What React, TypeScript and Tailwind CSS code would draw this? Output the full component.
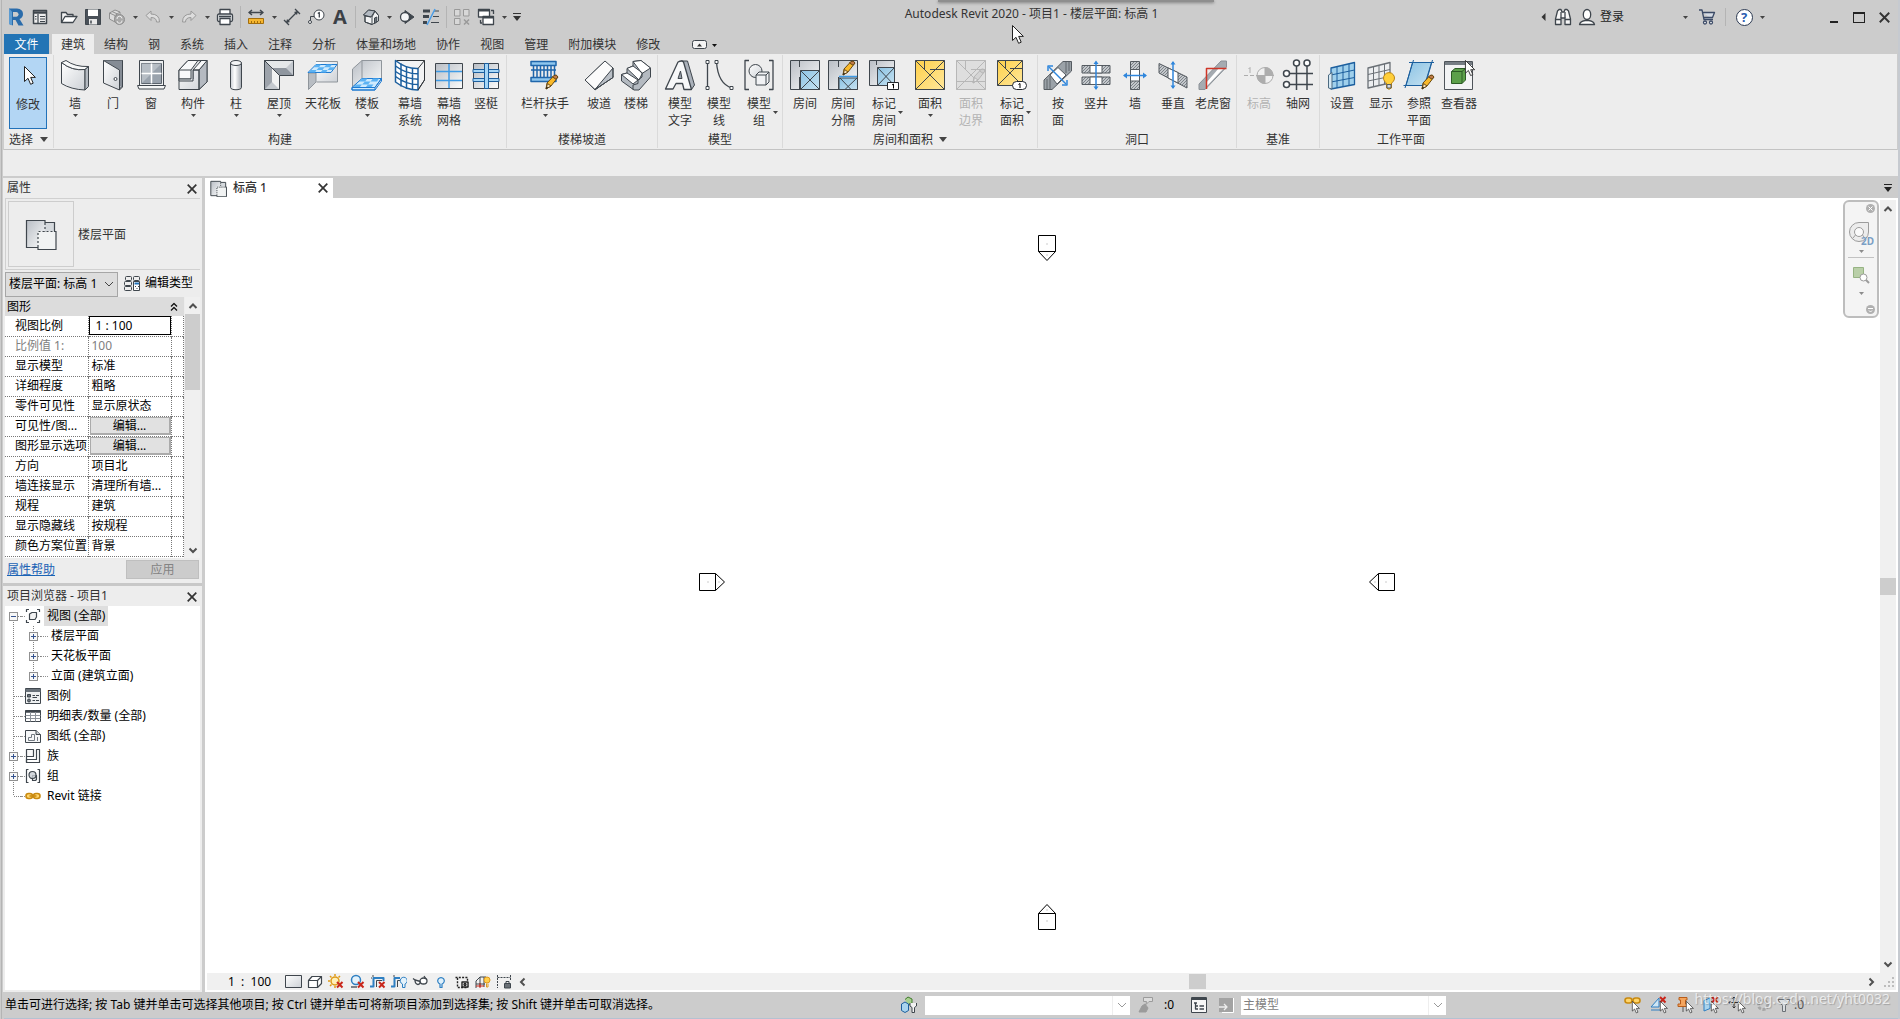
import type { ReactNode } from "react";

/* ---------- shared drawing helpers ---------- */

const INK = "#3f464d";
const BLUE = "#1c5f9e";

function Svg({ w = 32, h, children, sw = 1, stroke = INK }: { w?: number; h?: number; children: ReactNode; sw?: number; stroke?: string }) {
  const hh = h ?? w;
  return (
    <svg width={w} height={hh} viewBox={`0 0 ${w} ${hh}`} fill="none" stroke={stroke} strokeWidth={sw} strokeLinejoin="round" className="shrink-0" aria-hidden="true">
      {children}
    </svg>
  );
}

function Gradients() {
  return (
    <svg width="0" height="0" className="absolute" aria-hidden="true">
      <defs>
        <linearGradient id="grey" x1="0" y1="0" x2="1" y2="1">
          <stop offset="0" stopColor="#ffffff" />
          <stop offset="1" stopColor="#cdd1d6" />
        </linearGradient>
        <linearGradient id="greyRev" x1="0" y1="0" x2="1" y2="1">
          <stop offset="0" stopColor="#b9bec5" />
          <stop offset="1" stopColor="#fbfcfc" />
        </linearGradient>
        <linearGradient id="tube" x1="0" y1="0" x2="1" y2="0">
          <stop offset="0" stopColor="#c9ced4" />
          <stop offset="0.4" stopColor="#ffffff" />
          <stop offset="1" stopColor="#a3a9b1" />
        </linearGradient>
        <linearGradient id="sky" x1="0" y1="0" x2="1" y2="1">
          <stop offset="0" stopColor="#8cc3e4" />
          <stop offset="1" stopColor="#c6e2f1" />
        </linearGradient>
        <linearGradient id="sun" x1="0" y1="0" x2="1" y2="1">
          <stop offset="0" stopColor="#ffd04a" />
          <stop offset="1" stopColor="#ffe79b" />
        </linearGradient>
        <pattern id="hatch" width="3" height="3" patternUnits="userSpaceOnUse">
          <rect width="3" height="3" fill="#c4c8cc" />
          <path d="M0 3 3 0" stroke="#6b7177" strokeWidth="0.8" />
        </pattern>
      </defs>
    </svg>
  );
}

function Arrow({ tone = "#444444", big = false }: { tone?: string; big?: boolean }) {
  return big ? (
    <svg width="8" height="5" viewBox="0 0 8 5" className="shrink-0" aria-hidden="true"><path d="M0 0H8L4 5z" fill={tone} /></svg>
  ) : (
    <svg width="5" height="3" viewBox="0 0 5 3" className="shrink-0" aria-hidden="true"><path d="M0 0H5L2.5 3z" fill={tone} /></svg>
  );
}

function Chevron({ dir, tone = "#505050" }: { dir: "up" | "down" | "left" | "right"; tone?: string }) {
  const d = { up: "M1.5 7 5 3.5 8.5 7", down: "M1.5 3.5 5 7 8.5 3.5", left: "M6.5 1.5 3 5 6.5 8.5", right: "M3.5 1.5 7 5 3.5 8.5" }[dir];
  return <Svg w={10} sw={2} stroke={tone}><path d={d} strokeLinejoin="miter" /></Svg>;
}

function Cross({ size = 10 }: { size?: number }) {
  return (
    <svg width={size} height={size} viewBox="0 0 10 10" stroke="#333333" strokeWidth="1.7" className="shrink-0" aria-hidden="true">
      <path d="M0.7 0.7 9.3 9.3M9.3 0.7 0.7 9.3" />
    </svg>
  );
}

function Pencil({ x = 0, y = 0, grey = false }: { x?: number; y?: number; grey?: boolean }) {
  return (
    <g transform={`translate(${x} ${y})`} strokeWidth="1">
      <path d="M4 9 11 1.5Q13.5 0 15 3L8 12 3 15Z" fill={grey ? "#d4d4d4" : "#f9b92a"} stroke={grey ? "#b5b5b5" : "#6a4a12"} />
      <path d="M11 1.5Q13.5 0 15 3L13 5.2 9.5 3z" fill={grey ? "#cccccc" : "#c07a4a"} stroke={grey ? "#b5b5b5" : "#6a4a12"} />
      <path d="M4.5 9.5 8 12 3 15z" fill={grey ? "#e3e3e3" : "#f4dfb8"} stroke={grey ? "#b5b5b5" : "#6a4a12"} />
      <path d="M3 15 3.6 12.6 5.2 13.8z" fill={grey ? "#b5b5b5" : "#222222"} stroke="none" />
    </g>
  );
}

function Pointer({ x = 0, y = 0 }: { x?: number; y?: number }) {
  return <path transform={`translate(${x} ${y})`} d="M0.5 0.5V15.5L4 12.3 6.6 18.3 9.2 17.2 6.7 11.4H11.4Z" fill="#ffffff" stroke="#222222" strokeWidth="1" />;
}

/* ---------- ribbon icons (32 x 32) ---------- */

const RIBBON: Record<string, ReactNode> = {
  modify: <Svg><Pointer x={12} y={6} /></Svg>,
  wall: (
    <Svg><path d="M2.5 3.5Q13 12 26 10.5V31Q12 30.5 2.5 24.5z" fill="url(#grey)" /><path d="M2.5 3.5 7 1.5Q16 8 29.5 7.5L26 10.5Q13 12 2.5 3.5z" fill="#f8f9f9" /><path d="M26 10.5 29.5 7.5V27.5L26 31z" fill="#b4bac1" /></Svg>
  ),
  door: (
    <Svg><path d="M6.500 1.500H25.500V27L22.500 30" fill="#aeb4bb" /><path d="M6.500 1.500H25.500V27H22V11z" fill="#858c95" stroke="none" /><path d="M6.500 1.500 22.500 11V31L6.500 24z" fill="url(#grey)" /><path d="M25.500 1.500V28L22.500 31" /><circle cx="18.500" cy="20" r="1.500" fill="#ffffff" /></Svg>
  ),
  window: (
    <Svg><path d="M4.500 1.500H28.500V26.500H4.500z" fill="#eef0f1" /><path d="M6.500 4.500H26.500V24.500H6.500z" fill="#9aa3ad" stroke="#5b636c" /><path d="M6.500 4.500H26.500L6.500 24.500z" fill="#c3c9cf" stroke="none" opacity="0.7" /><path d="M16.500 4.500V24.500M6.500 14.500H26.500" stroke="#ffffff" strokeWidth="1.5" /><path d="M2.500 26.500H30.500L29 30H4z" fill="#f6f7f7" /></Svg>
  ),
  component: (
    <Svg><path d="M2 11 11 1.500H30V23L22 30.500H2z" fill="url(#grey)" /><path d="M22 30.500 30 23V1.500L22 11z" fill="#b5bac1" /><path d="M2 11 11 1.500H30L22 11H16L16 20H2z" fill="#f8f9fa" /><path d="M14 11 21 1.500 24 2 16 11V22H2V20H14z" fill="#dfe2e5" /><path d="M2 11H14M16 11H22V30.500" /></Svg>
  ),
  column: (
    <Svg><path d="M10.500 4V28.500C10.500 31.500 21.500 31.500 21.500 28.500V4z" fill="url(#tube)" /><ellipse cx="16" cy="4" rx="5.500" ry="2.500" fill="#f4f5f6" /></Svg>
  ),
  roof: (
    <Svg><path d="M1.500 1.500H30.500V16.500H16.500V30.500H1.500z" fill="#c4c9cf" /><path d="M1.500 1.500H30.500L23 9H9z" fill="#e5e8ea" stroke="none" /><path d="M1.500 1.500 9 9V23L1.500 30.500z" fill="#9da3ab" stroke="none" /><path d="M9 9H23L30.500 16.500H16.500z" fill="#8f969f" stroke="none" /><path d="M9 9 16.500 16.500V30.500L9 23z" fill="#f1f2f3" stroke="none" /><path d="M1.500 1.500H30.500V16.500H16.500V30.500H1.500zM1.500 1.500 16.500 16.500" /></Svg>
  ),
  ceiling: (
    <Svg stroke="#8f959b"><path d="M9 2.500H30.500V23H9.500" fill="url(#grey)" /><path d="M1.500 14V30.500L9 23V14z" fill="#b8bdc3" /><path d="M9 5.500H30L24 13.500H1z" fill="#cfeafd" stroke="#1e7ad1" /><path d="M9 5.500H14L12 8.200H6.500zM19.500 5.500H25L23 8.200H17zM12 8.200H17.500L15.500 11H9.500zM23 8.200H28L26 11H20.500zM4 11H9.500L8 13.500H1.500zM15.500 11H20.500L19 13.500H13.500z" fill="#5bb2f3" stroke="none" /></Svg>
  ),
  floor: (
    <Svg stroke="#8f959b"><path d="M1.500 10 11 1.500H30.500V20H11L1.500 28z" fill="url(#greyRev)" /><path d="M11 1.500V19" /><path d="M1 28.500 11 19.500H30.500L24 28.500V31H1z" fill="#cfeafd" stroke="#1e7ad1" /><path d="M11 19.500H16.500L14 22.500H8zM22 19.500H28L26 22.500H19.500zM14 22.500H19.500L17 25.500H11zM5 25.500H11L8.500 28.500H2zM17 25.500H22.500L20 28.500H14.500z" fill="#5bb2f3" stroke="none" /><path d="M1 28.500H24L30.500 19.500V22L24 31H1z" stroke="#1e7ad1" /></Svg>
  ),
  curtain: (
    <Svg stroke={BLUE}><path d="M2.500 1.500 6 1.500H30.500V21L24 31" stroke="#30353a" fill="#f2f3f4" /><path d="M1.500 1.500Q12 10 24 9.500V31Q12 31 1.500 23z" fill="#ffffff" strokeWidth="1.500" /><path d="M1.500 7Q12 15 24 14.800M1.500 12.500Q12 20 24 20.200M1.500 17.500Q12 25.500 24 25.600M7 4.500V27.500M12.500 7.500V30M18.500 9V31" strokeWidth="1.500" /><path d="M24 9.500 30.500 1.500M24 31 30.500 21" stroke="#30353a" /></Svg>
  ),
  grid: (
    <Svg><rect x="2.500" y="4.500" width="27" height="25" fill="url(#greyRev)" /><path d="M16 5V29M3 12.500H29M3 21.500H29" stroke="#3f9be6" strokeWidth="1.500" /></Svg>
  ),
  mullion: (
    <Svg><rect x="3.500" y="4.500" width="25" height="25" fill="url(#greyRev)" /><path d="M3 10.500H29V13.500H3zM3 19.500H29V22.500H3z" fill="#a5d6f7" stroke={BLUE} /><path d="M14.500 4.500H18.500V29.500H14.500z" fill="#a5d6f7" stroke={BLUE} /></Svg>
  ),
  railing: (
    <Svg stroke="#1f66ab"><path d="M2 2.500H27V6.500H2zM2 11H27M2 22.500H27V18.500H2z" fill="#8ec6ee" strokeWidth="1.500" /><path d="M4.500 6V18M8 6V18M11.500 6V18M15 6V18M18.500 6V18M22 6V18M25.500 6V18" strokeWidth="1.500" /><Pencil x={14} y={15} /></Svg>
  ),
  ramp: (
    <Svg><path d="M2 21 22 2 30 18 12 31z" fill="url(#grey)" /><path d="M2 21 22 2 24 11 12 29z" fill="#ffffff" stroke="none" /><path d="M22 2 30 9V19L12 30.500z" fill="#c3c8ce" stroke="none" /><path d="M2 21 22 2 30 9 12 30.500z" fill="#fbfbfb" stroke="none" /><path d="M12 30.500 30 9V18.500z" fill="#b9bfc6" /><path d="M2 21 12 30.500 30 18.500V9L22 2z" /></Svg>
  ),
  stair: (
    <Svg><path d="M1.500 15.500V22L14 31H19L30.500 18V9L21 1.500 13 2.500V7L7 9.500V14z" fill="#b4bac1" /><path d="M13 2.500 21 1.500 30.500 9 22 14.500zM7 9.500 13 7 22.500 14 19 21zM1.500 15.500 7 14 18 21 13 25z" fill="#ffffff" /><path d="M22 14.500V18L18 21V24.500L13 26V30.500" /></Svg>
  ),
  mtext: (
    <Svg><path d="M17 2 23.500 2 30.500 26 27.500 30.500 20 30z" fill="#aab1ba" /><path d="M1.500 30 14 3Q18 1 19.500 3L27.500 30.500H20L18.500 24.500H12L9 30z" fill="#f7f8f9" strokeWidth="1.300" /><path d="M14 19.500 16.500 12 18 19.500z" fill="#9aa1aa" /></Svg>
  ),
  mline: (
    <Svg><path d="M4.500 3V29M13.500 3Q15 25 29 29" strokeWidth="1.300" /><path d="M3 1.500H6V4.500H3zM3 27.500H6V30.500H3zM12 1.500H15V4.500H12zM27 27.500H30V30.500H27z" fill="#ffffff" /></Svg>
  ),
  mgroup: (
    <Svg><path d="M6 1.500H2V30.500H6M26 1.500H30V30.500H26" strokeWidth="1.300" /><circle cx="12.500" cy="12" r="6.500" fill="url(#grey)" /><path d="M13 16 16 13H26V23L23 26H13z" fill="#f1f2f4" /><path d="M13 16H23V26M23 16 26 13" /></Svg>
  ),
  room: (
    <Svg><rect x="1.500" y="1.500" width="29" height="29" fill="url(#greyRev)" /><path d="M11.500 11.500H30.500V30.500H11.500z" fill="url(#sky)" /><path d="M11.500 11.500 30.500 30.500M30.500 11.500 11.500 30.500M10.500 1.500V8M10.500 18V30.500" /></Svg>
  ),
  roomsep: (
    <Svg><rect x="1.500" y="1.500" width="29" height="29" fill="url(#greyRev)" /><path d="M12 19H30.500V30.500H12z" fill="url(#sky)" /><path d="M11.500 1.500V8M11.500 18V30.500M13 19 24 30.500M30 19 18 30.500" /><path d="M12 17.500H30" stroke="#3f9be6" strokeWidth="1.500" /><Pencil x={13} y={1} /></Svg>
  ),
  tagroom: (
    <Svg><rect x="1.500" y="1.500" width="25" height="25" fill="url(#greyRev)" /><path d="M9.500 8.500H26.500V26.500H9.500z" fill="url(#sky)" /><path d="M9.500 8.500 26.500 26.500M26.500 8.500 9.500 26.500M8.500 1.500V6" /><rect x="19.500" y="23.500" width="11" height="7" fill="#ffffff" stroke="#22272c" /><path d="M24 26 25.500 25V29.500" stroke="#000000" /></Svg>
  ),
  area: (
    <Svg><rect x="1.500" y="1.500" width="29" height="29" fill="url(#sun)" /><path d="M1.500 1.500 30.500 30.500M30.500 1.500 1.500 30.500M10.500 1.500V10.500M16 10.500H30.500" /></Svg>
  ),
  areabound: (
    <Svg stroke="#b7b7b7"><rect x="1.500" y="1.500" width="29" height="29" fill="#dedede" /><path d="M1.500 1.500 30.500 30.500M30.500 1.500 1.500 30.500M10.500 1.500V11M16 10.500H30.500M1.500 22.500H30.500" /><Pencil x={15} y={9} grey /></Svg>
  ),
  tagarea: (
    <Svg><rect x="1.500" y="1.500" width="25" height="25" fill="url(#sun)" /><path d="M1.500 1.500 26.500 26.500M26.500 1.500 1.500 26.500M9.500 1.500V9.500M14 9.500H26.500" /><rect x="16.500" y="22.500" width="14" height="8" rx="4" fill="#ffffff" stroke="#22272c" /><path d="M22.500 25.500 24 24.500V29" stroke="#000000" /></Svg>
  ),
  byface: (
    <Svg stroke="#555b61"><path d="M2 30.500V21L21 2.500H29.500V12L10 30.500z" fill="#9ba2a8" /><path d="M5 30V20M8 30V17M24 14V3M27 12V3" stroke="#60666c" /><path d="M8 16 16 8.500 24 16 15 25z" fill="#ffffff" /><path d="M7 8 24 25" stroke="#2f86dc" strokeWidth="1.500" /><path d="M6 12V7H11M20 26H25V21" stroke="#2f86dc" strokeWidth="1.500" /></Svg>
  ),
  shaft: (
    <Svg stroke="#555b61"><path d="M2 6.500H30V14H2zM2 18H30V25.500H2z" fill="url(#hatch)" /><path d="M10 6.500H22V14H10zM10 18H22V25.500H10z" fill="#ffffff" /><path d="M16 3V30" stroke="#2f86dc" strokeWidth="1.500" /><path d="M13.500 5 16 1.500 18.500 5zM13.500 27.500 16 31 18.500 27.500z" fill="#2f86dc" stroke="none" /></Svg>
  ),
  wallopen: (
    <Svg stroke="#555b61"><path d="M11.500 2.500H20.500V30.500H11.500z" fill="url(#hatch)" /><path d="M11.500 10.500H20.500V22H11.500z" fill="#ffffff" /><path d="M5 16.500H27" stroke="#2f86dc" strokeWidth="1.500" /><path d="M8 13.500 4 16.500 8 19.500zM24 13.500 28 16.500 24 19.500z" fill="#2f86dc" stroke="none" /></Svg>
  ),
  vertical: (
    <Svg stroke="#555b61"><path d="M2 4.500 30 18V29L2 14z" fill="url(#hatch)" /><path d="M11 9 21 13.500V24L11 19z" fill="#ffffff" /><path d="M16 3V29" stroke="#2f86dc" strokeWidth="1.500" /><path d="M13.500 5.500 16 2 18.500 5.500zM13.500 26.500 16 30 18.500 26.500z" fill="#2f86dc" stroke="none" /></Svg>
  ),
  dormer: (
    <Svg stroke="#8b9197"><path d="M2 30.500V25L24 2H29.500V8L8 30.500z" fill="#a5abb1" /><path d="M9 24 22 9H27L9 28z" fill="#ffffff" stroke="none" /><path d="M9.500 30V9.500H29.500" stroke="#cf3527" strokeWidth="1.500" /></Svg>
  ),
  level: (
    <Svg stroke="#adadad"><path d="M1 16.500H14M28 16.500H31" strokeDasharray="4 2" /><path d="M5.500 10 7 8.500V14" /><circle cx="22" cy="16.500" r="8" fill="#f0f0f0" /><path d="M22 16.500H14A8 8 0 0 0 22 24.500zM22 16.500H30A8 8 0 0 0 22 8.500z" fill="#adadad" /></Svg>
  ),
  axis: (
    <Svg sw={1.5}><path d="M14.500 7V31M25 7V31M7 14.500H31M7 25.500H31" /><circle cx="14.500" cy="4" r="3" fill="#ffffff" /><circle cx="25" cy="4" r="3" fill="#ffffff" /><circle cx="4.500" cy="14.500" r="3" fill="#ffffff" /><circle cx="4.500" cy="25.500" r="3" fill="#ffffff" /></Svg>
  ),
  setplane: (
    <Svg stroke={BLUE}><path d="M5 9 28.500 3.500V25.500L5 30z" fill="#9fd0ec" strokeWidth="1.300" /><path d="M11 8V29M17 6.500V28M23 5V27M5 16 28.500 11M5 23 28.500 18.500" /><path d="M2.500 16 6 13.500V30L2.500 29z" fill="#d5e8f3" stroke="#4c6a80" /></Svg>
  ),
  showplane: (
    <Svg stroke="#6a7076"><path d="M3 9 25 3.500V24L3 29z" fill="#eceef0" strokeWidth="1.300" /><path d="M8.500 7.500V28M14 6.500V27M19.500 5V25M3 15.500 25 10.500M3 22 25 17.500" /><path d="M21.500 24A5.500 5.500 0 1 1 26.500 24V29Q24 31.500 21.500 29z" fill="#ffcf3a" stroke="#b98313" /><path d="M22 25.500H26V29H22z" fill="#d6d9dc" stroke="#555b61" /></Svg>
  ),
  refplane: (
    <Svg stroke={BLUE}><path d="M9.500 3.500H28.500L21.500 26.500H3z" fill="url(#sky)" /><path d="M6 3.500H31M10.500 1 2 29M29.500 1 22 27M0.500 26.500H20" /><Pencil x={16} y={15} /></Svg>
  ),
  viewer: (
    <Svg><rect x="1.500" y="2.500" width="28" height="28" fill="#f2f3f4" stroke="#4e545a" /><path d="M2 3H29V6H2z" fill="#767d84" stroke="none" /><path d="M8.500 12.500 12 9.500H22.500V21L19 24.500H8.500z" fill="#5ca04a" stroke="#2d5c26" /><path d="M8.500 12.500H19V24.500M19 12.500 22.500 9.500" stroke="#2d5c26" /><g transform="translate(22 1) scale(.85)"><Pointer /></g></Svg>
  ),
};

/* ---------- ribbon ---------- */

type Tool = { icon: string; w: string; lines: string[]; drop?: "below" | "side"; off?: boolean };

const W36 = "w-9", W38 = "w-[38px]", W40 = "w-10", W42 = "w-[42px]", W46 = "w-[46px]", W72 = "w-[72px]";

const PANELS: { title: string; more?: boolean; tools: Tool[] }[] = [
  {
    title: "构建",
    tools: [
      { icon: "wall", w: W38, lines: ["墙"], drop: "below" },
      { icon: "door", w: W38, lines: ["门"] },
      { icon: "window", w: W38, lines: ["窗"] },
      { icon: "component", w: W46, lines: ["构件"], drop: "below" },
      { icon: "column", w: W40, lines: ["柱"], drop: "below" },
      { icon: "roof", w: W46, lines: ["屋顶"], drop: "below" },
      { icon: "ceiling", w: W42, lines: ["天花板"] },
      { icon: "floor", w: W46, lines: ["楼板"], drop: "below" },
      { icon: "curtain", w: W40, lines: ["幕墙", "系统"] },
      { icon: "grid", w: W38, lines: ["幕墙", "网格"] },
      { icon: "mullion", w: W36, lines: ["竖梃"] },
    ],
  },
  {
    title: "楼梯坡道",
    tools: [
      { icon: "railing", w: W72, lines: ["栏杆扶手"], drop: "below" },
      { icon: "ramp", w: W36, lines: ["坡道"] },
      { icon: "stair", w: W38, lines: ["楼梯"] },
    ],
  },
  {
    title: "模型",
    tools: [
      { icon: "mtext", w: W40, lines: ["模型", "文字"] },
      { icon: "mline", w: W38, lines: ["模型", "线"] },
      { icon: "mgroup", w: W42, lines: ["模型", "组"], drop: "side" },
    ],
  },
  {
    title: "房间和面积",
    more: true,
    tools: [
      { icon: "room", w: W40, lines: ["房间"] },
      { icon: "roomsep", w: W36, lines: ["房间", "分隔"] },
      { icon: "tagroom", w: W46, lines: ["标记", "房间"], drop: "side" },
      { icon: "area", w: W46, lines: ["面积"], drop: "below" },
      { icon: "areabound", w: W36, lines: ["面积", "边界"], off: true },
      { icon: "tagarea", w: W46, lines: ["标记", "面积"], drop: "side" },
    ],
  },
  {
    title: "洞口",
    tools: [
      { icon: "byface", w: W36, lines: ["按", "面"] },
      { icon: "shaft", w: W40, lines: ["竖井"] },
      { icon: "wallopen", w: W38, lines: ["墙"] },
      { icon: "vertical", w: W38, lines: ["垂直"] },
      { icon: "dormer", w: W42, lines: ["老虎窗"] },
    ],
  },
  {
    title: "基准",
    tools: [
      { icon: "level", w: W40, lines: ["标高"], off: true },
      { icon: "axis", w: W38, lines: ["轴网"] },
    ],
  },
  {
    title: "工作平面",
    tools: [
      { icon: "setplane", w: W40, lines: ["设置"] },
      { icon: "showplane", w: W38, lines: ["显示"] },
      { icon: "refplane", w: W38, lines: ["参照", "平面"] },
      { icon: "viewer", w: W42, lines: ["查看器"] },
    ],
  },
];

function ToolButton({ tool }: { tool: Tool }) {
  return (
    <button type="button" disabled={tool.off} className={`${tool.w} flex shrink-0 flex-col items-center pt-1 ${tool.off ? "text-[#b3b3b3]" : "text-[#333333]"}`}>
      {RIBBON[tool.icon]}
      <span className="mt-1 grid w-full grid-cols-[1fr_auto_1fr] items-center leading-[17px] whitespace-nowrap">
        <span />
        <span className="flex flex-col items-center">
          {tool.lines.map((l) => <span key={l}>{l}</span>)}
        </span>
        <span className="flex pl-0.5">{tool.drop === "side" && <Arrow />}</span>
      </span>
      {tool.drop === "below" && <span className="pt-0.5"><Arrow /></span>}
    </button>
  );
}

function Ribbon() {
  return (
    <div className="mr-[3px] flex h-24 shrink-0 border-b border-[#c3c3c3] bg-[#ededed] text-xs text-[#333333]">
      <div className="my-px flex w-[50px] flex-col border-r border-[#dadada] px-[5px]">
        <button type="button" className="mt-0.5 flex h-[72px] w-[38px] flex-col items-center border border-[#2272b9] bg-[#b3d6f4] pt-0.5 leading-[17px]">
          {RIBBON.modify}
          <span className="mt-1">修改</span>
        </button>
        <button type="button" className="mt-0.5 flex flex-1 items-center justify-between whitespace-nowrap">选择 <Arrow big /></button>
      </div>
      {PANELS.map((p, i) => (
        <div key={p.title} className={`my-px flex flex-col px-0.5 ${i < PANELS.length - 1 ? "border-r border-[#dadada]" : ""}`}>
          <div className="flex h-[76px]">{p.tools.map((t) => <ToolButton key={t.icon} tool={t} />)}</div>
          <div className="flex flex-1 items-center justify-center gap-1.5">{p.title}{p.more && <Arrow big />}</div>
        </div>
      ))}
    </div>
  );
}

/* ---------- title bar ---------- */

function Ico({ label, children }: { label: string; children: ReactNode }) {
  return <button type="button" aria-label={label} className="flex h-6 w-6 shrink-0 items-center justify-center">{children}</button>;
}
function Drop({ label }: { label: string }) {
  return <button type="button" aria-label={label} className="flex h-6 w-3 shrink-0 items-center justify-center"><Arrow /></button>;
}
function Sep() {
  return <span className="mx-[3px] h-[22px] w-px shrink-0 bg-[#b4b4b4]" />;
}

function TitleBar() {
  return (
    <header className="flex h-[34px] shrink-0 items-center">
      <div className="flex items-center">
        <Ico label="Revit">
          <Svg w={18} stroke="none"><path d="M2 0.500H10Q16 1 16 6 16 9.500 12.500 11L16.500 17.500H11.500L8.500 12H6V17.500L2 16z" fill="#2a6cab" /><path d="M6 4H9.500Q11.500 4.300 11.500 6.300 11.500 8.500 9.500 8.700H6z" fill="#cccccc" /><path d="M2 0.500 5 3.500V17.200L2 16z" fill="#5c9bd1" /></Svg>
        </Ico>
        <Ico label="主页"><Svg w={16} sw={1.5}><rect x="1.500" y="1.500" width="13" height="13" fill="#eeeeee" /><path d="M1.500 3.500H14.500" strokeWidth="2.500" /><path d="M6 5V14.500M8 7.500H13M8 10H13M8 12.500H13M3 7.500H4.500M3 10H4.500" strokeWidth="1.200" /></Svg></Ico>
        <div className="ml-[5px]"><Ico label="打开"><Svg w={18} sw={1.3}><path d="M1.500 14.500V4.500H6L7.500 6.500H13V8.500" fill="#f2f2f2" /><path d="M1.500 14.500 5 8.500H17L13 14.500z" fill="#ffffff" /></Svg></Ico></div>
        <Ico label="保存"><Svg w={18}><path d="M1.500 1.500H16.500V16.500H1.500z" fill="#4a5159" /><path d="M4 1.500H14V8H4z" fill="#ffffff" stroke="none" /><path d="M5 11H13V16.500H5z" fill="#e9e9e9" stroke="none" /><path d="M7 12.500V15.500" strokeWidth="1.500" /></Svg></Ico>
        <Ico label="同步"><Svg w={18} stroke="#8f8f8f"><path d="M1.500 5 7 2 12 4V9L7 14 1.500 11z" fill="#dcdcdc" /><path d="M1.500 5 7 7.500 12 4M7 7.500V14M4 3.500 9.500 6" /><circle cx="11.500" cy="11.500" r="5" fill="#a9a9a9" /><path d="M9 11A2.500 2.500 0 0 1 14 10.500M14 12.500A2.500 2.500 0 0 1 9 13" stroke="#eeeeee" /></Svg></Ico>
        <Drop label="同步选项" />
        <Ico label="放弃"><Svg w={16} stroke="#999999"><path d="M1 6.500 6 2V5Q14.500 5 14.500 13H11.500Q11.500 8.500 6 8.500V11.500z" fill="#dddddd" /></Svg></Ico>
        <Drop label="放弃选项" />
        <Ico label="重做"><Svg w={16} stroke="#999999"><path d="M15 6.500 10 2V5Q1.500 5 1.500 13H4.500Q4.500 8.500 10 8.500V11.500z" fill="#dddddd" /></Svg></Ico>
        <Drop label="重做选项" />
        <Ico label="打印"><Svg w={18} sw={1.3}><path d="M4 6V1.500H14V6" fill="#ffffff" /><rect x="1.500" y="6" width="15" height="7.500" rx="1.500" fill="#e3e5e7" /><path d="M4 10.500H14V16.500H4z" fill="#ffffff" /><path d="M3 8.500H15" strokeWidth="1.600" /></Svg></Ico>
        <Sep />
        <Ico label="测量"><Svg w={18}><path d="M2 4.500H16M5 2 2 4.500 5 7M13 2 16 4.500 13 7" strokeWidth="1.500" /><path d="M1.500 10.500H16.500V15.500H1.500z" fill="#f6b62f" stroke="#a36e0d" /><path d="M4.500 13V15M7.500 13V15M10.500 13V15M13.500 13V15" stroke="#a36e0d" /></Svg></Ico>
        <Drop label="测量选项" />
        <Ico label="对齐标注"><Svg w={18} sw={1.3}><path d="M3.500 14.500 14.500 3.500M1 12 6 17M12 1 17 6" /><path d="M3 15 4 11 7 14zM15 3 11 4 14 7z" fill={INK} stroke="none" /></Svg></Ico>
        <Ico label="标记"><Svg w={18}><circle cx="12" cy="7" r="5" fill="#ffffff" /><path d="M7 8.500H3.500V13" /><circle cx="3" cy="14" r="1.500" fill="#ffffff" /><path d="M10.800 5.500 12.300 4.500V9.500" strokeWidth="1.300" /></Svg></Ico>
        <Ico label="文字"><span className="text-xl leading-6 font-bold text-[#3b4046] [font-family:'Open_Sans',sans-serif]">A</span></Ico>
        <Sep />
        <Ico label="三维视图"><Svg w={18}><path d="M1.500 7 6.500 2 13 3 16.500 7.500V13L10 16.500 3 14V8z" fill="#f2f3f4" /><path d="M1.500 7 6.500 2 13 3 9 9z" fill="#b3bac2" /><path d="M9 9 3 8V14L10 16.500V9L13 3 16.500 7.500" /><path d="M12.500 10V15.500L14.800 14V9z" fill="#6d747b" /></Svg></Ico>
        <Drop label="三维视图选项" />
        <Ico label="剖面"><Svg w={18}><path d="M7 2.500 16 9 7 15.500z" fill="#3f464d" /><circle cx="7" cy="9" r="4.500" fill="#f4f5f6" strokeWidth="1.300" /></Svg></Ico>
        <Ico label="细线"><Svg w={18}><path d="M1 3H8M1 8.500H7M1 14.500H5" strokeWidth="3" /><path d="M12 3H17M11 8.500H17M9 14.500H17" /><path d="M5 17 13 1" stroke="#4b9ee8" strokeWidth="1.500" /></Svg></Ico>
        <Sep />
        <Ico label="关闭隐藏窗口"><Svg w={18} stroke="#999999"><path d="M1.500 1.500H7V8H1.500zM10.500 1.500H16V8H10.500zM1.500 10.500H7V16.500H1.500z" fill="#d8d8d8" /><path d="M11 11.500 16 16.500M16 11.500 11 16.500" strokeWidth="1.500" /></Svg></Ico>
        <Ico label="切换窗口"><Svg w={18} sw={1.3}><path d="M1.500 1.500H12.500V9H1.500z" fill="#ffffff" /><path d="M1.500 2.500H12.500" strokeWidth="2" /><path d="M6 8.500H16.500V16.500H6z" fill="#ffffff" /><path d="M6 9.500H16.500" strokeWidth="2" /><path d="M14 2.500H16.500V6M3.500 12V15H5" /></Svg></Ico>
        <Drop label="切换窗口选项" />
        <button type="button" aria-label="自定义" className="flex h-6 w-3.5 flex-col items-center justify-center gap-0.5"><span className="h-px w-2 bg-[#333333]" /><Arrow big tone="#333333" /></button>
      </div>

      <h1 className="flex-1 pb-1.5 text-center text-xs whitespace-nowrap text-[#333333]">Autodesk Revit 2020 - 项目1 - 楼层平面: 标高 1</h1>

      <div className="flex items-center">
        <button type="button" aria-label="展开搜索" className="flex h-6 w-2 items-center justify-center"><Svg w={5} h={8} stroke="none"><path d="M4.500 0V8L0.500 4z" fill="#333333" /></Svg></button>
        <div className="ml-1"><Ico label="搜索"><Svg w={18} sw={1.3}><path d="M1.500 16.500V11L3.500 3 5 1.500H7L8 4H10L11 1.500H13L14.500 3 16.500 11V16.500H11V10H7V16.500z" fill="#f6f6f6" /><path d="M1.500 11.500H7M11 11.500H16.500M7 4V10M11 4V10" /></Svg></Ico></div>
        <button type="button" className="flex h-6 w-[104px] items-center gap-1 pl-[3px] text-xs text-[#222222]">
          <Svg w={18} sw={1.3}><path d="M1.500 16.500Q2 13.500 7 12.500H11Q16 13.500 16.500 16.500z" fill="#ffffff" /><ellipse cx="9" cy="6.500" rx="3.700" ry="5" fill="#ffffff" /></Svg>
          登录
        </button>
        <Drop label="账户选项" />
        <div className="ml-1"><Ico label="商店"><Svg w={18} stroke="#3b4a66" sw={1.3}><path d="M1 2H4L6 11.500H15M4.800 4.500H16.500L14.500 9.500H5.500" fill="#d6dce6" /><circle cx="7" cy="14.500" r="1.500" fill="#ffffff" /><circle cx="13" cy="14.500" r="1.500" fill="#ffffff" /></Svg></Ico></div>
        <span className="mx-1.5 h-[18px] w-px bg-[#b4b4b4]" />
        <Ico label="帮助"><span className="flex h-[17px] w-[17px] items-center justify-center rounded-full border border-[#2c3a52] bg-white text-[13px] leading-4 font-bold text-[#2a5db0]">?</span></Ico>
        <Drop label="帮助选项" />
        <div className="ml-[54px] flex items-center gap-px pr-1">
          <Ico label="最小化"><span className="mt-2.5 h-0.5 w-2 bg-[#222222]" /></Ico>
          <Ico label="最大化"><span className="h-[11px] w-3 border border-t-2 border-[#222222]" /></Ico>
          <Ico label="关闭"><Cross size={11} /></Ico>
        </div>
      </div>
    </header>
  );
}

const TABS = ["建筑", "结构", "钢", "系统", "插入", "注释", "分析", "体量和场地", "协作", "视图", "管理", "附加模块", "修改"];

function TabStrip() {
  return (
    <nav className="flex h-5 shrink-0 text-xs text-[#333333]">
      <button type="button" className="mr-[3px] w-[45px] bg-[#2374b5] pt-0.5 text-white">文件</button>
      {TABS.map((t, i) => (
        <button key={t} type="button" className={`shrink-0 pt-0.5 whitespace-nowrap ${i === 0 ? "w-[42px] bg-[#ededed]" : "px-2.5"}`}>{t}</button>
      ))}
      <button type="button" aria-label="最小化功能区" className="ml-[22px] flex items-center gap-1 pt-0.5">
        <Svg w={16} h={10}><rect x="0.500" y="0.500" width="14" height="8" rx="2" fill="#f4f4f4" /><path d="M5 6.500 7.500 3.500 10 6.500z" fill="#333333" stroke="none" /></Svg>
        <Arrow tone="#111111" />
      </button>
    </nav>
  );
}

/* ---------- properties ---------- */

function PlanIcon({ size = 32 }: { size?: number }) {
  return (
    <svg width={size} height={size} viewBox="0 0 32 32" fill="none" stroke="#3f464d" strokeWidth={size < 20 ? 1.8 : 1.2} className="shrink-0" aria-hidden="true">
      <path d="M1.500 2.500H20V13.500H13V29.500H1.500z" fill="url(#greyRev)" stroke="none" />
      <path d="M20 4.500H29.500V13.500H20z" fill="#d5d9dd" stroke="none" />
      <path d="M13 13.500H31V31.500H13z" fill="#f1f3f3" stroke="none" />
      <path d="M13 29.500H1.500V2.500H20V4.500H29.500V13.500H31V31.500H13V29" />
      <path d="M20 5V13.500M13 29V13.500H31" strokeDasharray="2 2" />
    </svg>
  );
}

const PROPS: { name: string; value: string; kind?: "input" | "button" | "off" }[] = [
  { name: "视图比例", value: "1 : 100", kind: "input" },
  { name: "比例值 1:", value: "100", kind: "off" },
  { name: "显示模型", value: "标准" },
  { name: "详细程度", value: "粗略" },
  { name: "零件可见性", value: "显示原状态" },
  { name: "可见性/图...", value: "编辑...", kind: "button" },
  { name: "图形显示选项", value: "编辑...", kind: "button" },
  { name: "方向", value: "项目北" },
  { name: "墙连接显示", value: "清理所有墙..." },
  { name: "规程", value: "建筑" },
  { name: "显示隐藏线", value: "按规程" },
  { name: "颜色方案位置", value: "背景" },
];

function CloseButton({ label }: { label: string }) {
  return <button type="button" aria-label={label} className="flex h-5 w-4 items-center justify-center pt-px"><Cross /></button>;
}

function Properties() {
  return (
    <section className="flex h-[405px] shrink-0 flex-col px-0.5 text-xs text-black">
      <div className="flex h-5 shrink-0 items-center justify-between pl-0.5 text-[#333333]">
        <h2>属性</h2>
        <CloseButton label="关闭属性" />
      </div>
      <div className="flex h-[72px] shrink-0 items-center gap-1 border-y border-l border-[#d0d0d0] pl-0.5 text-[#333333]">
        <div className="flex h-[66px] w-[66px] items-center justify-center border border-[#cdcdcd]"><PlanIcon /></div>
        <span className="pt-0.5">楼层平面</span>
      </div>
      <div className="flex h-[27px] shrink-0 items-center pt-px">
        <div className="relative flex items-center">
          <select aria-label="类型" className="h-[25px] w-[113px] appearance-none border border-[#a6a6a6] bg-[#dddddd] pl-[3px] text-xs"><option>楼层平面: 标高 1</option></select>
          <span className="pointer-events-none absolute right-1"><Svg w={10} sw={1} stroke="#444444"><path d="M1 3 5 7 9 3" /></Svg></span>
        </div>
        <button type="button" className="flex flex-1 items-center gap-1 pb-0.5 pl-1.5 whitespace-nowrap">
          <Svg w={17}><rect x="1.500" y="1.500" width="6" height="4" rx="1" fill="#eeeeee" /><rect x="9.500" y="1.500" width="6" height="4" rx="1" fill="#eeeeee" /><rect x="0.500" y="6.500" width="7" height="4" rx="1" fill="#eeeeee" /><rect x="0.500" y="11.500" width="7" height="4" rx="1" fill="#eeeeee" /><rect x="9.500" y="6.500" width="6" height="9" fill="#ffffff" /><path d="M10.500 8.500H15" stroke="#2473b9" strokeWidth="2" /><path d="M11 11.500H12M14 11.500H15M12.500 13.500H13.500" /></Svg>
          编辑类型
        </button>
      </div>
      <div className="flex min-h-0 flex-1">
        <div className="w-[179px] overflow-hidden bg-white">
          <div className="flex h-[19px] items-center justify-between bg-[#dcdcdc] pr-1.5 pl-0.5">
            图形
            <Svg w={8} h={10} sw={1.3} stroke="#111111"><path d="M1 4.500 4 1.500 7 4.500M1 8.500 4 5.500 7 8.500" /></Svg>
          </div>
          <table className="w-full table-fixed border-collapse leading-[18px]">
            <colgroup><col className="w-[83px]" /><col className="w-[83px]" /><col /></colgroup>
            <tbody>
              {PROPS.map((p) => (
                <tr key={p.name} className="h-5 border-b border-dotted border-[#777777]">
                  <th scope="row" className={`border-r border-dotted border-[#777777] p-0 pl-2.5 text-left font-normal whitespace-nowrap ${p.kind === "off" ? "text-[#808080]" : ""}`}>{p.name}</th>
                  <td className={`border-r border-dotted border-[#777777] p-0 whitespace-nowrap ${p.kind === "off" ? "text-[#808080]" : ""}`}>
                    {p.kind === "input" ? (
                      <input aria-label={p.name} defaultValue={p.value} className="block h-[19px] w-full border border-black bg-white pl-1.5" />
                    ) : p.kind === "button" ? (
                      <button type="button" className="ml-px block h-[18px] w-[81px] border border-r-2 border-b-2 border-[#ababab] bg-[#e1e1e1] leading-4">{p.value}</button>
                    ) : (
                      <span className="pl-[3px]">{p.value}</span>
                    )}
                  </td>
                  <td className="border-r border-dotted border-[#777777] p-0" />
                </tr>
              ))}
            </tbody>
          </table>
        </div>
        <div className="ml-px flex w-[15px] flex-col items-center bg-[#f0f0f0]">
          <button type="button" aria-label="向上滚动" className="flex h-[17px] items-center"><Chevron dir="up" /></button>
          <div className="h-[76px] w-full bg-[#cdcdcd]" />
          <button type="button" aria-label="向下滚动" className="mt-auto flex h-[17px] items-center"><Chevron dir="down" /></button>
        </div>
      </div>
      <div className="flex h-[25px] shrink-0 items-start justify-between pt-0.5 pr-px pl-0.5">
        <a href="#help" className="leading-5 text-[#1a63b5] underline">属性帮助</a>
        <button type="button" disabled className="h-[19px] w-[73px] border border-[#bfbfbf] bg-[#cccccc] leading-[17px] text-[#838383]">应用</button>
      </div>
    </section>
  );
}

/* ---------- project browser ---------- */

function Guide({ up, down, box, right }: { up?: boolean; down?: boolean; box?: "+" | "-"; right?: boolean }) {
  return (
    <svg width="16" height="20" viewBox="0 0 16 20" fill="none" stroke="#808080" strokeDasharray="1 1" className="shrink-0" aria-hidden="true">
      {up && <path d="M8.500 0V10" />}
      {down && <path d="M8.500 10V20" />}
      {right && <path d="M9 10.500H16" />}
      {box && (
        <g strokeDasharray="none">
          <rect x="4.500" y="6.500" width="8" height="8" fill="#f7f7f7" stroke="#919191" />
          <path d={box === "+" ? "M6 10.500H11M8.500 8V13" : "M6 10.500H11"} stroke="#35538f" />
        </g>
      )}
    </svg>
  );
}
function Dots({ className }: { className: string }) {
  return <span className={`${className} mt-px h-0 shrink-0 border-t border-dotted border-[#909090]`} />;
}

const TREE_ICONS: Record<string, ReactNode> = {
  views: <Svg w={16} sw={1.2}><path d="M4 1.500H1.500V4M12 1.500H14.500V4M1.500 12V14.500H4M14.500 12V14.500H12" /><path d="M4.500 6 7 4.500H11.500V9L10 11.500H4.500z" fill="#f2f2f2" /></Svg>,
  legend: <Svg w={16}><path d="M0.500 0.500H15.500V15.500H0.500z" fill="#eef0f1" /><path d="M0.500 2.500H15.500" strokeWidth="3" stroke="#6a727a" /><path d="M2.500 6.500H5.500V9H2.500z" fill="#6a727a" /><circle cx="4" cy="12.500" r="1.500" fill="#6a727a" /><path d="M7.500 7.500H10M11 7.500H14M7.500 9.500H12M7.500 12.500H10M11 12.500H14" /></Svg>,
  sheet: <Svg w={16}><path d="M0.500 2.500H15.500V13.500H0.500z" fill="#ffffff" /><path d="M0.500 3.500H15.500" strokeWidth="2.500" /><path d="M0.500 7.500H15.500M0.500 10.500H15.500M5.500 4V13.500M10.500 4V13.500" stroke="#8c9299" /></Svg>,
  paper: <Svg w={16}><path d="M0.500 2.500H11L15.500 6.500V14.500H0.500z" fill="#f6f7f8" /><path d="M11 2.500V6.500H15.500" fill="#c9cdd2" /><path d="M3.500 12.500V9.500H6.500V6.500H9.500V12.500zM12.500 9V13" stroke="#737a82" /></Svg>,
  family: <Svg w={16} sw={1.2}><path d="M1.500 1.500H8.500V8.500H1.500z" fill="#f8f8f8" /><path d="M11.500 1.500H14.500V14.500H1.500V11.500H11.500z" fill="#ffffff" /><path d="M1.500 8.500V14.500" /></Svg>,
  group: <Svg w={16} sw={1.2}><path d="M3.500 1.500H1.500V14.500H3.500M12.500 1.500H14.500V14.500H12.500" /><path d="M7.500 7.500H11.500V11.500L10.500 12.500H7.500z" fill="#e9ebed" /><circle cx="7.500" cy="7" r="3.500" fill="#c9ced4" fillOpacity="0.8" /></Svg>,
  link: <Svg w={16} stroke="#c98a10" sw={1.6}><rect x="1" y="5.500" width="6.500" height="5" rx="2.500" fill="#ffd56b" /><rect x="8.500" y="5.500" width="6.500" height="5" rx="2.500" fill="#ffd56b" /><path d="M4.500 8H11.500" /></Svg>,
};

const TREE: { text: string; icon?: string; child?: boolean; box?: "+" | "-"; first?: boolean; last?: boolean; sel?: boolean }[] = [
  { text: "视图 (全部)", icon: "views", box: "-", first: true, sel: true },
  { text: "楼层平面", child: true, box: "+" },
  { text: "天花板平面", child: true, box: "+" },
  { text: "立面 (建筑立面)", child: true, box: "+", last: true },
  { text: "图例", icon: "legend" },
  { text: "明细表/数量 (全部)", icon: "sheet" },
  { text: "图纸 (全部)", icon: "paper" },
  { text: "族", icon: "family", box: "+" },
  { text: "组", icon: "group", box: "+" },
  { text: "Revit 链接", icon: "link", last: true },
];

function Browser() {
  return (
    <section className="flex min-h-0 flex-1 flex-col border-t-[3px] border-[#c8c8c8] px-0.5 pb-0.5 text-xs text-black">
      <div className="flex h-5 shrink-0 items-center justify-between pl-0.5 text-[#333333]">
        <h2>项目浏览器 - 项目1</h2>
        <CloseButton label="关闭项目浏览器" />
      </div>
      <ul className="flex-1 overflow-hidden bg-white">
        {TREE.map((n) => (
          <li key={n.text} className="flex h-5 items-center whitespace-nowrap">
            {n.child ? (
              <>
                <Guide up down />
                <span className="w-1" />
                <Guide up down={!n.last} box={n.box} right />
                <Dots className="w-[7px]" />
                <span className="px-[3px]">{n.text}</span>
              </>
            ) : (
              <>
                <Guide up={!n.first} down={!n.last} box={n.box} right />
                <Dots className="w-1" />
                <span className="flex w-4 shrink-0 justify-center">{n.icon && TREE_ICONS[n.icon]}</span>
                <span className={`ml-[3px] px-[3px] leading-5 ${n.sel ? "bg-[#dedede]" : ""}`}>{n.text}</span>
              </>
            )}
          </li>
        ))}
      </ul>
    </section>
  );
}

/* ---------- drawing area ---------- */

function Marker({ className, turn }: { className: string; turn: string }) {
  return (
    <svg width="28" height="28" viewBox="0 0 28 28" className={`absolute ${className} ${turn}`} fill="none" stroke="#000000" aria-hidden="true">
      <path d="M5.500 1.500H22.500V17.500H5.500zM5.500 17.500 14 26.500 22.500 17.500" />
      <path d="M14 9V11M14 20V22" stroke="#cccccc" />
    </svg>
  );
}

const RedX = ({ x, y }: { x: number; y: number }) => <path d={`M${x} ${y}l5.500 5.500m0 -5.500l-5.500 5.500`} stroke="#c8261b" strokeWidth="2" />;

const VIEW_TOOLS: [string, ReactNode][] = [
  ["详细程度", <Svg w={17} h={14}><rect x="0.500" y="0.500" width="16" height="12" fill="url(#grey)" /></Svg>],
  ["视觉样式", <Svg w={16} sw={1.2}><path d="M1.500 6.500 5 2.500H14.500V9.500L10.500 13.500H1.500z" fill="#ffffff" /><path d="M1.500 6.500H10.500V13.500M10.500 6.500 14.500 2.500" /></Svg>],
  ["日光路径", <Svg w={16}><circle cx="7" cy="7" r="4" fill="#fff0b8" stroke="#df9a17" strokeWidth="1.500" /><path d="M7 0V2M7 12V14M0 7H2M2 2 3.500 3.500M12 2 10.500 3.500M2 12 3.500 10.500" stroke="#df9a17" strokeWidth="1.500" /><RedX x={9} y={8} /></Svg>],
  ["阴影", <Svg w={16}><circle cx="7" cy="6" r="4.500" fill="#e4f2fb" stroke="#2e7fc2" strokeWidth="1.500" /><path d="M2 13H8" stroke="#7b8187" strokeWidth="2" /><RedX x={9} y={8} /></Svg>],
  ["裁剪视图", <Svg w={16}><path d="M0 12.500H3.500V4H13.500V7" stroke="#2e7fc2" strokeWidth="2" /><path d="M6.500 13V6.500H12M3 1V3M1 4H2" /><RedX x={9} y={8} /></Svg>],
  ["裁剪区域", <Svg w={16}><path d="M0 12.500H3.500V4H9" stroke="#2e7fc2" strokeWidth="2" /><path d="M6.500 13V6.500H9M3 1V3" /><path d="M11.500 10A3.500 3.500 0 1 1 14 10V13.500H11.500z" fill="#e4f2fb" stroke="#2e7fc2" /></Svg>],
  ["临时隐藏", <Svg w={16} sw={1.3}><path d="M1 4.500 3 6Q3 10 6 10.500 8 10.500 8.500 7.500" fill="#ffffff" /><ellipse cx="11.500" cy="7" rx="3.500" ry="3" fill="#ffffff" /><path d="M3 6 8.500 7.500M14 5 12 2" /></Svg>],
  ["显示隐藏", <Svg w={16} stroke="#2e7fc2"><path d="M7 10A3.300 3.300 0 1 1 9 10V13.500H7z" fill="#dff0fb" strokeWidth="1.200" /></Svg>],
  ["临时视图", <Svg w={16} sw={1.4} stroke="#222222"><path d="M1.500 3.500H13.500V13.500H3.500V3.500" strokeDasharray="2 1.300" /><rect x="8" y="8" width="6" height="5" fill="#ffffff" /><circle cx="11" cy="10.500" r="1" /></Svg>],
  ["分析模型", <Svg w={16}><path d="M1 7 5 3H11M1 7V14M5 3V13M1 10H10M9 3V13" /><path d="M1 12H9M5 9V14" stroke="#c8261b" /><circle cx="12" cy="6" r="3" fill="#ffcf4a" stroke="#e0981a" /><path d="M11.500 9.500V13H13V9.500" stroke="#e0981a" /></Svg>],
  ["约束", <Svg w={16}><path d="M1.500 1V14M14.500 1V7M1.500 3.500H14.500" strokeDasharray="2 1" /><rect x="8.500" y="9.500" width="6" height="4.500" fill="#6a7076" /><path d="M10 9V7.500H13V9" /></Svg>],
];

function Viewport() {
  return (
    <main className="flex min-w-0 flex-1 flex-col">
      <div className="flex h-5 shrink-0 items-center justify-between">
        <div className="flex h-5 w-32 items-center bg-white px-[5px] text-xs text-[#333333]">
          <PlanIcon size={17} />
          <span className="flex-1 pl-1.5 font-medium">标高 1</span>
          <button type="button" aria-label="关闭视图"><Cross /></button>
        </div>
        <button type="button" aria-label="视图列表" className="flex h-5 w-5 flex-col items-center justify-center gap-0.5"><span className="h-px w-2 bg-[#222222]" /><Arrow big tone="#222222" /></button>
      </div>
      <div className="flex min-h-0 flex-1 bg-white pt-0.5 pr-0.5">
        <div className="relative min-w-0 flex-1">
          <Marker className="top-[34px] left-[828px]" turn="" />
          <Marker className="top-[368px] left-[493px]" turn="-rotate-90" />
          <Marker className="top-[368px] left-[1163px]" turn="rotate-90" />
          <Marker className="top-[703px] left-[828px]" turn="rotate-180" />
          <div className="absolute top-0 right-px flex h-[118px] w-9 flex-col items-center rounded-md border-2 border-[#bdbdbd] bg-[#f4f4f4]">
            <button type="button" aria-label="关闭导航栏" className="mt-0.5 mr-0.5 self-end"><Svg w={9} stroke="#ffffff"><circle cx="4.500" cy="4.500" r="4.500" fill="#b0b0b0" stroke="none" /><path d="M2.500 2.500 6.500 6.500M6.500 2.500 2.500 6.500" /></Svg></button>
            <button type="button" aria-label="二维控制盘" className="mt-2 flex items-center">
              <Svg w={26} stroke="#9c9c9c"><path d="M11 1.500H20.500V11A9.500 9.500 0 1 1 11 1.500z" fill="#ececec" /><circle cx="11" cy="11" r="4.500" fill="#fafafa" /><path d="M7.500 14 4.500 17.500M14.500 14 16 16" /><text x="13" y="24" fontSize="10" fontWeight="700" fill="#7b9fc4" stroke="none">2D</text></Svg>
            </button>
            <span className="mt-[3px]"><Arrow tone="#8c8c8c" /></span>
            <span className="mt-1 h-px w-[26px] bg-[#c2c2c2]" />
            <button type="button" aria-label="区域放大" className="mt-2"><Svg w={18} stroke="#9c9c9c"><rect x="1.500" y="1.500" width="10" height="10" fill="#b9cfa8" stroke="#96b383" /><circle cx="11.500" cy="11.500" r="3.500" fill="#ffffff" /><path d="M14 14 17 17" strokeWidth="2" /></Svg></button>
            <span className="mt-2"><Arrow tone="#8c8c8c" /></span>
            <button type="button" aria-label="导航栏选项" className="mt-auto mr-0.5 mb-0.5 self-end"><Svg w={9} stroke="#ffffff"><circle cx="4.500" cy="4.500" r="4.500" fill="#b0b0b0" stroke="none" /><path d="M2 3.500H7M3 5.500 4.500 7 6 5.500" /></Svg></button>
          </div>
        </div>
        <div className="flex w-4 flex-col items-center bg-[#f0f0f0]">
          <button type="button" aria-label="向上滚动" className="flex h-[18px] items-center"><Chevron dir="up" /></button>
          <div className="flex w-full flex-1 items-center"><div className="h-[17px] w-full bg-[#cdcdcd]" /></div>
          <button type="button" aria-label="向下滚动" className="flex h-[18px] items-center"><Chevron dir="down" /></button>
        </div>
      </div>
      <div className="flex h-[19px] shrink-0 bg-white pr-0.5 pb-0.5 pl-0.5">
        <div className="flex flex-1 items-center bg-[#f0f0f0]">
          <button type="button" className="w-[76px] pl-[21px] text-left text-xs leading-4 whitespace-pre text-black">1  :  100</button>
          {VIEW_TOOLS.map(([label, icon]) => (
            <button key={label} type="button" aria-label={label} className="flex h-4 w-[21px] shrink-0 items-center justify-center">{icon}</button>
          ))}
          <button type="button" aria-label="向左滚动" className="ml-1"><Chevron dir="left" /></button>
          <div className="flex h-[15px] flex-1 items-center pl-[661px]"><div className="h-full w-[17px] bg-[#cdcdcd]" /></div>
          <button type="button" aria-label="向右滚动" className="mr-2 flex items-center"><Chevron dir="right" /></button>
          <Svg w={12} stroke="none"><path d="M8 1H10V3H8zM8 5H10V7H8zM8 9H10V11H8zM4 5H6V7H4zM4 9H6V11H4zM0 9H2V11H0z" fill="#bdbdbd" /></Svg>
        </div>
      </div>
    </main>
  );
}

/* ---------- status bar ---------- */

function SelectBox({ label, value }: { label: string; value: string }) {
  return (
    <div className="relative flex items-center">
      <select aria-label={label} className="h-[19px] w-[205px] appearance-none bg-white pl-0.5 text-xs text-[#808080]"><option>{value}</option></select>
      <span className="pointer-events-none absolute right-0 flex h-[19px] w-[18px] items-center justify-center border-l border-[#eeeeee]"><Svg w={10} stroke="#9a9a9a"><path d="M1 3 5 7 9 3" /></Svg></span>
    </div>
  );
}

const mini = (x: number, y: number) => <g transform={`translate(${x} ${y}) scale(.65)`}><Pointer /></g>;

const SELECT_TOOLS: [string, ReactNode][] = [
  ["选择链接", <Svg w={18}><g stroke="#c98a10" strokeWidth="1.600"><rect x="1" y="2" width="7" height="5" rx="2.500" fill="#ffd56b" /><rect x="9" y="2" width="7" height="5" rx="2.500" fill="#ffd56b" /></g>{mini(8, 5)}</Svg>],
  ["选择基线图元", <Svg w={18} stroke="#2e7fc2"><path d="M1 14H10M1 11 9 2V11z" fill="#cfe6f5" /><RedX x={10} y={1} />{mini(10, 5)}</Svg>],
  ["选择锁定图元", <Svg w={18} stroke="#b85c1a"><path d="M3 1.500H11V4H9.500V8H12V10.500H2V8H4.500V4H3z" fill="#f4a55e" /><path d="M7 11V16" stroke="#555555" />{mini(10, 5)}</Svg>],
  ["按面选择图元", <Svg w={18} stroke="#2e7fc2"><path d="M2 4.500 8 2V12.500L2 15z" fill="#a9d4ee" /><RedX x={10} y={1} />{mini(9, 5)}</Svg>],
  ["拖曳图元", <Svg w={18} stroke="#333333"><path d="M6 1V12M1 6.500H12M4.500 2.500 6 1 7.500 2.500M2.500 5 1 6.500 2.500 8M4.500 10.500 6 12 7.500 10.500" />{mini(10, 5)}</Svg>],
  ["后台进程", <Svg w={18} stroke="#a6a6a6" sw={3}><circle cx="9" cy="9" r="4.500" strokeDasharray="3 1.500" /></Svg>],
];

function StatusBar() {
  return (
    <footer className="flex h-[27px] shrink-0 items-center border-b border-[#b4c2d2] pl-px text-xs text-black">
      <p className="w-[895px] shrink-0 truncate">单击可进行选择; 按 Tab 键并单击可选择其他项目; 按 Ctrl 键并单击可将新项目添加到选择集; 按 Shift 键并单击可取消选择。</p>
      <button type="button" aria-label="工作集" className="w-[25px] shrink-0"><Svg w={18}><path d="M5 3.500 8 1 12 3V7L8 9" fill="#a8d08f" stroke="#3f7a2b" /><path d="M1.500 8 5 6 8.500 8V14.500L5 16.500 1.500 14.500z" fill="#a9d4ee" stroke={BLUE} /><path d="M10 7V10L12 11.500V16.500H14.500V11.500L16.500 10V7" fill="#f2f2f2" /></Svg></button>
      <SelectBox label="活动工作集" value="" />
      <div className="flex w-[58px] items-center justify-between pl-2">
        <Svg w={18} stroke="#9b9b9b"><path d="M5.500 1.500H14.500V5.500H11L8 8.500 8.500 5.500H5.500z" fill="#dcdcdc" /><path d="M1 16 4 10 7 8 10 12 8 16z" fill="#9b9b9b" /></Svg>
        <span className="w-7 pl-1">:0</span>
      </div>
      <button type="button" aria-label="设计选项" className="ml-[3px] w-[27px] shrink-0"><Svg w={16}><path d="M0.500 0.500H15.500V15.500H0.500z" fill="#f6f6f6" /><path d="M0.500 2H15.500" strokeWidth="2" /><path d="M3 6H6M4.500 6V12H7M4.500 9H7M8.500 9H13M8.500 12H13" strokeWidth="1.300" /></Svg></button>
      <button type="button" aria-label="添加到集" className="w-[23px] shrink-0"><Svg w={16} stroke="#909090"><rect x="1" y="1" width="14" height="14" fill="#a3a3a3" stroke="none" /><path d="M15.500 1V15.500H4" stroke="#ffffff" /><path d="M1 10H8M6 7 9 10 6 13" stroke="#eeeeee" strokeWidth="1.300" /></Svg></button>
      <SelectBox label="主模型" value="主模型" />
      <div className="ml-auto flex w-[280px] items-center">
        {SELECT_TOOLS.map(([label, icon]) => (
          <button key={label} type="button" aria-label={label} className="flex w-[26px] shrink-0 justify-center">{icon}</button>
        ))}
        <button type="button" className="flex items-center gap-0.5 text-[#555555]"><Svg w={16} stroke="#6a7076"><path d="M1.500 2.500H14.500L9.500 8.500V14.500H6.500V8.500z" fill="#d9dde0" /></Svg>:0</button>
      </div>
    </footer>
  );
}

export default function App() {
  return (
    <div className="relative flex h-screen flex-col overflow-hidden bg-[#cccccc] pl-1 [font-family:'Noto_Sans','Noto_Sans_CJK_SC',sans-serif]">
      <Gradients />
      <div className="absolute inset-y-0 left-px w-px bg-[#b4b4b4]" />
      <div className="absolute inset-y-0 right-0 w-0.5 bg-[#c6cad0]" />
      <div className="absolute top-0 left-[938px] h-0.5 w-[276px] bg-[#8e8e8e] shadow-[0_1px_3px_#777777]" />
      <TitleBar />
      <TabStrip />
      <Ribbon />
      <div className="-ml-px mr-0.5 h-[26px] shrink-0 bg-[#ededed]" />
      <div className="-ml-px mr-0.5 flex min-h-0 flex-1 pt-0.5">
        <aside className="flex w-[199px] shrink-0 flex-col bg-[#ededed]">
          <Properties />
          <Browser />
        </aside>
        <div className="w-[3px] shrink-0" />
        <Viewport />
      </div>
      <StatusBar />
      <svg width="13" height="20" viewBox="0 0 13 20" className="pointer-events-none absolute top-[25px] left-[1012px]" aria-hidden="true"><Pointer /></svg>
      <span className="pointer-events-none absolute right-2.5 bottom-2 text-sm leading-6 text-white/70 [text-shadow:1px_1px_1px_#00000033]">https://blog.csdn.net/yht0032</span>
    </div>
  );
}
